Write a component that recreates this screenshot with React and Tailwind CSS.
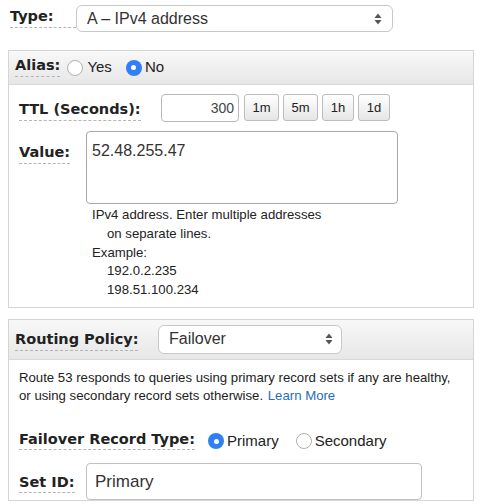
import React from 'react';

const Label = ({ children, className = '' }) => (
    <span
        className={`inline-block font-bold text-[#222] leading-none pb-[3px] border-b border-dashed border-[#b5b5b5] ${className}`}
        style={{ fontFamily: '"DejaVu Sans", Verdana, sans-serif' }}
    >
        {children}
    </span>
);

const Arrows = () => (
    <svg width="8" height="12" viewBox="0 0 8 12" className="shrink-0">
        <path d="M4 0.5 L7.5 5 H0.5 Z" fill="#555" />
        <path d="M4 11.5 L7.5 7 H0.5 Z" fill="#555" />
    </svg>
);

const Radio = ({ checked }) =>
    checked ? (
        <span className="w-[16px] h-[16px] rounded-full bg-[#2f7ff6] flex items-center justify-center shrink-0">
            <span className="block w-[5px] h-[5px] rounded-full bg-white" />
        </span>
    ) : (
        <span className="block w-[16px] h-[16px] rounded-full bg-white border border-[#b0b0b0] shrink-0" />
    );

const TtlButton = ({ label, w }) => (
    <button className={`${w} h-[27px] rounded-[3px] border border-[#bdbdbd] bg-gradient-to-b from-white to-[#e6e6e6] text-[13px] text-[#222]`}>
        {label}
    </button>
);

const Header = ({ children, h }) => (
    <div className={`${h} flex items-center border-b border-[#d8d8d8] bg-gradient-to-b from-[#f8f8f8] to-[#e7e7e7]`}>
        {children}
    </div>
);

export default function App() {
    return (
        <div
            className="w-[482px] h-[504px] overflow-hidden bg-white text-[#222]"
            style={{ fontFamily: '"Liberation Sans", Arial, sans-serif' }}
        >
            {/* Type row */}
            <div className="flex items-center pt-[5px] pl-[10px]">
                <Label className="text-[14.5px] w-[66px]">Type:</Label>
                <div className="w-[317px] h-[27px] rounded-[6px] border border-[#c8c8c8] flex items-center justify-between pl-[10px] pr-[10px] text-[16px] text-[#333]">
                    <span>A – IPv4 address</span>
                    <Arrows />
                </div>
            </div>

            {/* Alias panel */}
            <div className="ml-[8px] mt-[18px] w-[466px] border border-[#d5d5d5]">
                <Header h="h-[34px]">
                    <div className="flex items-center pl-[6px] text-[15px]">
                        <Label className="text-[14.5px]">Alias:</Label>
                        <span className="ml-[7px]"><Radio /></span>
                        <span className="ml-[4px] text-[15px]">Yes</span>
                        <span className="ml-[14px]"><Radio checked /></span>
                        <span className="ml-[3px] text-[15px]">No</span>
                    </div>
                </Header>
                <div className="pl-[10px] pt-[9px] pb-[6px]">
                    <div className="flex items-center">
                        <div className="w-[142px] mt-[2px]">
                            <Label className="text-[14.5px]">TTL (Seconds):</Label>
                        </div>
                        <div className="w-[78px] h-[28px] rounded-[4px] border border-[#b8b8b8] flex items-center justify-end pr-[4px] text-[14px] text-[#444]">
                            300
                        </div>
                        <div className="flex gap-[4px] ml-[5px] -mt-[1px]">
                            <TtlButton label="1m" w="w-[35px]" />
                            <TtlButton label="5m" w="w-[35px]" />
                            <TtlButton label="1h" w="w-[32px]" />
                            <TtlButton label="1d" w="w-[32px]" />
                        </div>
                    </div>
                    <div className="flex items-start mt-[9px]">
                        <div className="w-[67px] mt-[9px]">
                            <Label className="text-[14.5px]">Value:</Label>
                        </div>
                        <div className="w-[312px] h-[73px] rounded-[4px] border border-[#a8a8a8] pl-[5px] pt-[11px] text-[16px] text-[#333] leading-none">
                            52.48.255.47
                        </div>
                    </div>
                    <div className="pl-[73px] pt-[2px] pb-[1px] text-[13.2px] leading-[18.8px] text-[#222]">
                        <div>IPv4 address. Enter multiple addresses</div>
                        <div className="pl-[15px]">on separate lines.</div>
                        <div>Example:</div>
                        <div className="pl-[15px]">192.0.2.235</div>
                        <div className="pl-[15px]">198.51.100.234</div>
                    </div>
                </div>
            </div>

            {/* Routing panel */}
            <div className="ml-[8px] mt-[11px] w-[466px] border border-[#d5d5d5]">
                <Header h="h-[40px]">
                    <div className="flex items-center pl-[6px]">
                        <div className="w-[143px]">
                            <Label className="text-[14.5px]">Routing Policy:</Label>
                        </div>
                        <div className="w-[184px] h-[29px] rounded-[6px] border border-[#c8c8c8] bg-white flex items-center justify-between pl-[10px] pr-[8px] text-[16px] text-[#333]">
                            <span>Failover</span>
                            <Arrows />
                        </div>
                    </div>
                </Header>
                <div className="pl-[10px] pt-[9px]">
                    <div className="text-[13.2px] leading-[18px] text-[#222]">
                        Route 53 responds to queries using primary record sets if any are healthy,
                        <br />
                        or using secondary record sets otherwise.{' '}
                        <span className="ml-[1px] text-[#1f6eb5]">Learn More</span>
                    </div>
                    <div className="flex items-center mt-[25px]">
                        <Label className="text-[14.5px]">Failover Record Type:</Label>
                        <span className="ml-[13px]"><Radio checked /></span>
                        <span className="ml-[3px] text-[15px]">Primary</span>
                        <span className="ml-[17px]"><Radio /></span>
                        <span className="ml-[3px] text-[15px]">Secondary</span>
                    </div>
                    <div className="flex items-center mt-[11px]">
                        <div className="w-[67px]">
                            <Label className="text-[14.5px]">Set ID:</Label>
                        </div>
                        <div className="w-[336px] h-[37px] rounded-[4px] border border-[#c0c0c0] flex items-center pl-[8px] text-[17px] text-[#333]">
                            Primary
                        </div>
                    </div>
                </div>
            </div>
        </div>
    );
}
